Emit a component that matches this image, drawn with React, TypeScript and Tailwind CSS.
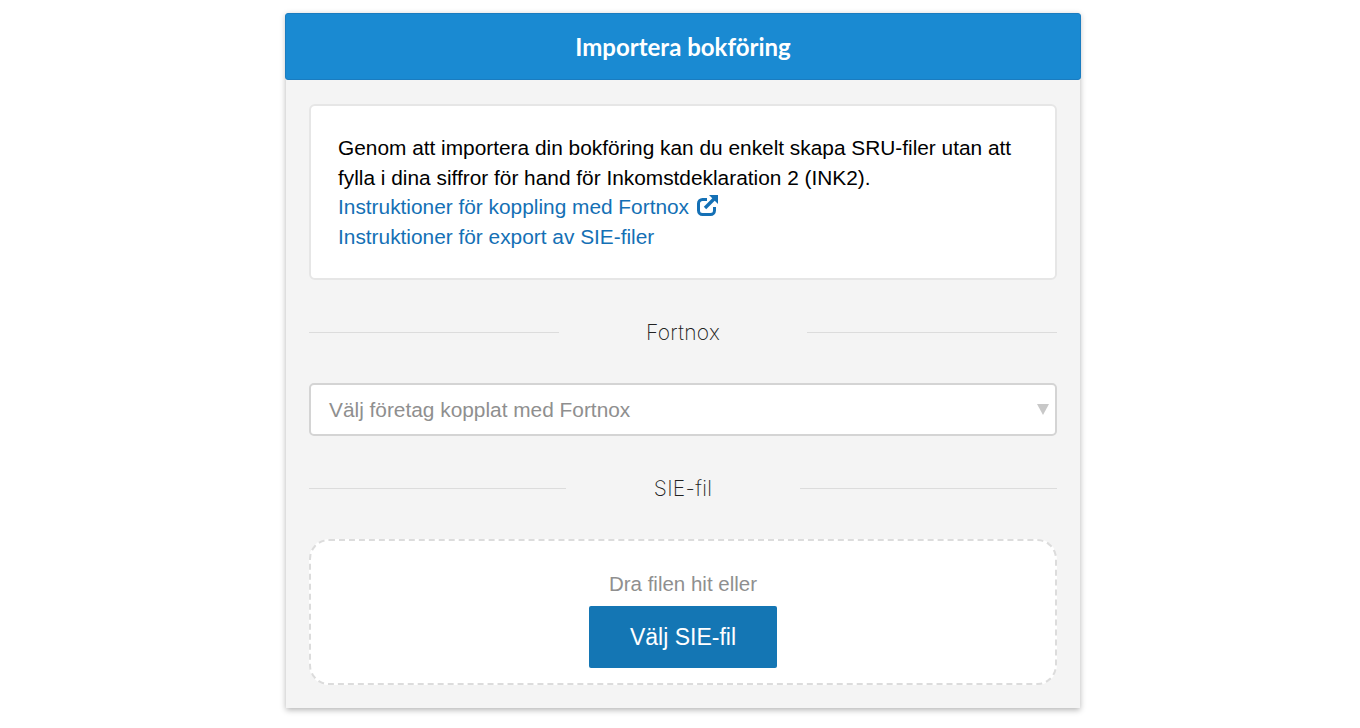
function Divider({ label, lineWidth }: { label: string; lineWidth: string }) {
  return (
    <div className="flex h-[24px] items-center justify-between">
      <div className={`h-px bg-[#dcdcdc] ${lineWidth}`} />
      <span className="translate-y-px font-['Inter',sans-serif] text-[21px] font-extralight tracking-[0.3px] text-[#222]">
        {label}
      </span>
      <div className={`h-px bg-[#dcdcdc] ${lineWidth}`} />
    </div>
  );
}

function ExternalIcon() {
  return (
    <svg width="21" height="21" viewBox="0 0 21 21" fill="none" stroke="currentColor" className="mb-[3px]">
      <path d="M10 4.5H5.5a4 4 0 0 0-4 4v7a4 4 0 0 0 4 4h8a4 4 0 0 0 4-4V12" strokeWidth="3" />
      <path d="M8 13 17 4" strokeWidth="3.4" />
      <path d="M12 0h9v9z" fill="currentColor" stroke="none" />
    </svg>
  );
}

export default function App() {
  return (
    <div className="flex min-h-[728px] justify-center bg-white pl-[6px] pt-[13px] font-['Liberation_Sans',sans-serif]">
      <div className="h-[695px] w-[794px] bg-[#f4f4f4] shadow-[0_2px_6px_rgba(0,0,0,0.3)]">
        {/* Header */}
        <div className="-mx-px flex h-[67px] items-center justify-center rounded-[3px] border border-[#1a7cc0] bg-[#1a8ad2]">
          <h1 className="font-['Lato',sans-serif] text-[24px] font-bold text-white">
            Importera bokföring
          </h1>
        </div>

        <div className="flex flex-col px-[23px] pt-[24px]">
          {/* Intro */}
          <div className="h-[176px] rounded-[6px] border-2 border-[#e6e6e6] bg-white px-[27px] pt-[27px] text-[20.85px] leading-[29.5px] text-black">
            <p>
              Genom att importera din bokföring kan du enkelt skapa SRU-filer utan att fylla i dina
              siffror för hand för Inkomstdeklaration 2 (INK2).
            </p>
            <a className="flex items-center gap-[8px] text-[#1470b5]" href="#">
              Instruktioner för koppling med Fortnox
              <ExternalIcon />
            </a>
            <a className="block text-[#1470b5]" href="#">
              Instruktioner för export av SIE-filer
            </a>
          </div>

          <div className="mt-[40px]">
            <Divider label="Fortnox" lineWidth="w-[250px]" />
          </div>

          {/* Company select */}
          <div className="mt-[39px] flex h-[53px] items-center justify-between rounded-[5px] border-2 border-[#d4d4d4] bg-white pl-[18px] pr-[6px] text-[20.85px] text-[#8f8f8f]">
            <span>Välj företag kopplat med Fortnox</span>
            <svg width="12" height="11" viewBox="0 0 12 11" className="fill-[#c8c8c8]">
              <path d="M0 0h12L6 11z" />
            </svg>
          </div>

          <div className="mt-[40px]">
            <Divider label="SIE-fil" lineWidth="w-[257px]" />
          </div>

          {/* Drop zone */}
          <div className="mt-[39px] flex h-[146px] flex-col items-center rounded-[20px] border-2 border-dashed border-[#dcdcdc] bg-white pt-[31px]">
            <p className="text-[20.5px] leading-[24px] text-[#8f8f8f]">Dra filen hit eller</p>
            <button className="mt-[10px] h-[62px] w-[188px] rounded-[2px] bg-[#1476b4] text-[23px] text-white">
              Välj SIE-fil
            </button>
          </div>
        </div>
      </div>
    </div>
  );
}
